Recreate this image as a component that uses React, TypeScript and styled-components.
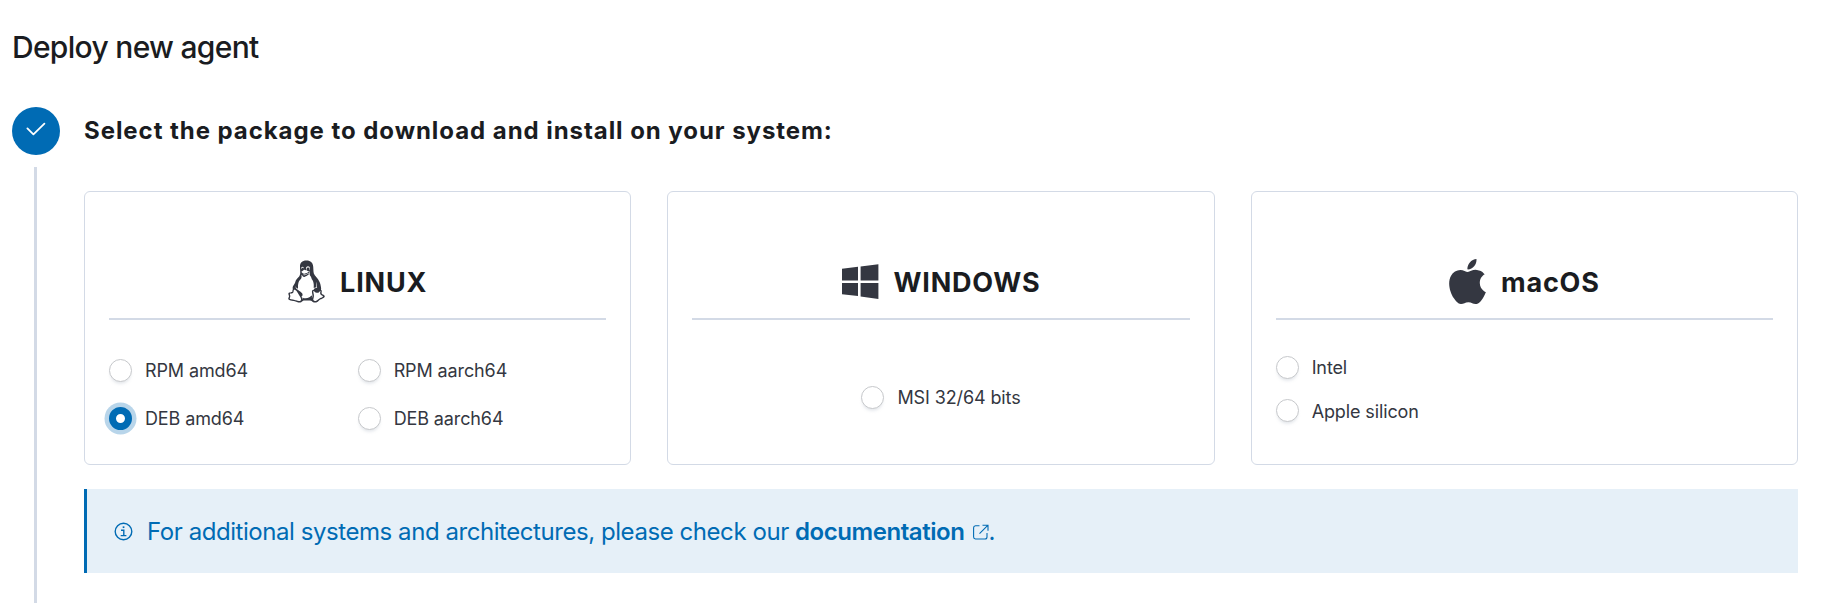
import React from "react";
import styled, { createGlobalStyle } from "styled-components";
import { IoLogoTux } from "react-icons/io5";
import { SiApple } from "react-icons/si";

const GlobalStyle = createGlobalStyle`
  * { box-sizing: border-box; }
  body {
    margin: 0;
    background: #fff;
    color: #343741;
    font-family: Inter, "Liberation Sans", sans-serif;
    overflow: hidden;
  }
  h1, h2, h3, p { margin: 0; }
`;

const Page = styled.main`
  display: flex;
  flex-direction: column;
  height: 603px;
  padding: 23px 33px 0 12px;
`;

const Title = styled.h1`
  height: 48px;
  margin-bottom: 36px;
  font-size: 30px;
  line-height: 48px;
  font-weight: 450;
  letter-spacing: -0.7px;
  color: #1a1c21;
`;

const Step = styled.section`
  flex: 1;
  display: flex;
  gap: 24px;
  min-height: 0;
`;

const StepRail = styled.div`
  width: 48px;
  display: flex;
  flex-direction: column;
  gap: 12px;
`;

const StepCircle = styled.div`
  height: 48px;
  flex: none;
  border-radius: 50%;
  background: #006bb4;
  display: flex;
  justify-content: center;
  padding-top: 10px;
`;

const StepLine = styled.div`
  width: 3px;
  flex: 1;
  margin-left: 22px;
  background: #d3dae6;
`;

const StepBody = styled.div`
  flex: 1;
`;

const StepTitle = styled.h2`
  height: 48px;
  margin-bottom: 36px;
  font-size: 24px;
  line-height: 48px;
  font-weight: 700;
  letter-spacing: 0.94px;
  color: #1a1c21;
`;

const Cards = styled.div`
  display: grid;
  grid-template-columns: repeat(3, 1fr);
  gap: 36px;
`;

const Card = styled.div`
  height: 274px;
  padding: 66px 24px 0;
  border: 1px solid #d3dae6;
  border-radius: 6px;
`;

const CardHeader = styled.div`
  height: 62px;
  display: flex;
  justify-content: center;
  gap: 14px;
  border-bottom: 2px solid #d3dae6;
`;

const Logo = styled.span`
  display: flex;
  width: 38px;
  height: 47px;
  align-items: center;
  justify-content: flex-start;
  color: #343741;

  svg { flex: none; }
`;

const TuxLogo = styled(IoLogoTux)`
  margin-left: -4px;
`;

const AppleLogo = styled(SiApple)`
  margin-left: -4px;
`;

const CardTitle = styled.h3`
  font-size: 27px;
  line-height: 50px;
  font-weight: 700;
  letter-spacing: 0.8px;
  color: #1a1c21;
`;

const Options = styled.div<{ $columns?: number; $centered?: boolean; $top: number; $gap: number }>`
  display: grid;
  grid-template-columns: ${(p) => (p.$centered ? "auto" : `repeat(${p.$columns ?? 1}, 1fr)`)};
  justify-content: ${(p) => (p.$centered ? "center" : "stretch")};
  row-gap: ${(p) => p.$gap}px;
  padding-top: ${(p) => p.$top}px;
`;

const Option = styled.label`
  display: flex;
  align-items: center;
  gap: 13px;
  height: 24px;
`;

const OptionText = styled.span<{ $drop?: number }>`
  padding-top: ${(p) => 2 + (p.$drop ?? 0)}px;
  font-size: 18px;
  line-height: 24px;
  letter-spacing: -0.12px;
`;

const Radio = styled.span<{ $checked?: boolean }>`
  width: 23px;
  height: 23px;
  flex: none;
  border-radius: 50%;
  border: ${(p) => (p.$checked ? "7px solid #006bb4" : "1px solid #c6c8cb")};
  background: #fff;
  box-shadow: ${(p) => (p.$checked ? "0 0 0 4.5px #b8d5ea" : "0 3px 3px -1px rgba(152, 162, 179, 0.25)")};
`;

const Callout = styled.div`
  display: flex;
  align-items: center;
  height: 84px;
  margin-top: 24px;
  padding-left: 27px;
  border-left: 3px solid #006bb4;
  background: #e6f0f8;
  color: #006bb4;
`;

const CalloutText = styled.p`
  margin-left: 14px;
  padding-top: 2px;
  font-size: 24px;
  line-height: 36px;
  letter-spacing: -0.44px;
  white-space: nowrap;
`;

const DocLink = styled.a`
  font-weight: 600;
`;

const PopoutIcon = styled.svg`
  margin: 0 0 0 8px;
`;

const WindowsLogo = () => (
  <svg width="37" height="35" viewBox="0 0 37 35" fill="currentColor">
    <path d="M0 4.8 16 2.8V16.5H0zM18.6 2.5 36.4.2V16.5H18.6zM0 19H16V32L0 30.2zM18.6 19H36.4V35L18.6 32.5z" />
  </svg>
);

const Check = () => (
  <svg width="24" height="24" viewBox="0 0 24 24" fill="none" stroke="#fff" strokeWidth="1.8" strokeLinecap="round" strokeLinejoin="round">
    <path d="M3.4 11.4 9.4 17.3 20.4 6.7" />
  </svg>
);

const Info = () => (
  <svg width="19" height="19" viewBox="0 0 19 19" fill="none" stroke="currentColor" strokeWidth="1.4">
    <circle cx="9.5" cy="9.5" r="8.3" />
    <path d="M7 8.2H9.8V13.5M6.7 13.6H12.4" />
    <path d="M8.7 5.2H10.4" strokeWidth="1.7" />
  </svg>
);

const Popout = () => (
  <PopoutIcon width="16" height="16" viewBox="0 0 16 16" fill="none" stroke="currentColor" strokeWidth="1.1">
    <path d="M6.5 1.7H2.5A2 2 0 0 0 .6 3.7V13A2 2 0 0 0 2.5 15H12A2 2 0 0 0 14 13V9M9.5 1.2H15V6.7M15 1.2 6.5 9.7" />
  </PopoutIcon>
);

interface ChoiceProps {
  label: string;
  checked?: boolean;
  drop?: number;
}

const Choice = ({ label, checked, drop }: ChoiceProps) => (
  <Option>
    <Radio $checked={checked} />
    <OptionText $drop={drop}>{label}</OptionText>
  </Option>
);

export default function App() {
  return (
    <>
      <GlobalStyle />
      <Page>
        <Title>Deploy new agent</Title>
        <Step>
          <StepRail>
            <StepCircle>
              <Check />
            </StepCircle>
            <StepLine />
          </StepRail>
          <StepBody>
            <StepTitle>Select the package to download and install on your system:</StepTitle>
            <Cards>
              <Card>
                <CardHeader>
                  <Logo><TuxLogo size={45} /></Logo>
                  <CardTitle>LINUX</CardTitle>
                </CardHeader>
                <Options $columns={2} $top={38} $gap={24}>
                  <Choice label="RPM amd64" />
                  <Choice label="RPM aarch64" />
                  <Choice label="DEB amd64" checked />
                  <Choice label="DEB aarch64" />
                </Options>
              </Card>
              <Card>
                <CardHeader>
                  <Logo><WindowsLogo /></Logo>
                  <CardTitle>WINDOWS</CardTitle>
                </CardHeader>
                <Options $centered $top={65} $gap={0}>
                  <Choice label="MSI 32/64 bits" />
                </Options>
              </Card>
              <Card>
                <CardHeader>
                  <Logo><AppleLogo size={45} /></Logo>
                  <CardTitle>macOS</CardTitle>
                </CardHeader>
                <Options $top={35} $gap={19}>
                  <Choice label="Intel" />
                  <Choice label="Apple silicon" drop={2} />
                </Options>
              </Card>
            </Cards>
            <Callout>
              <Info />
              <CalloutText>
                For additional systems and architectures, please check our <DocLink>documentation</DocLink>
                <Popout />.
              </CalloutText>
            </Callout>
          </StepBody>
        </Step>
      </Page>
    </>
  );
}
